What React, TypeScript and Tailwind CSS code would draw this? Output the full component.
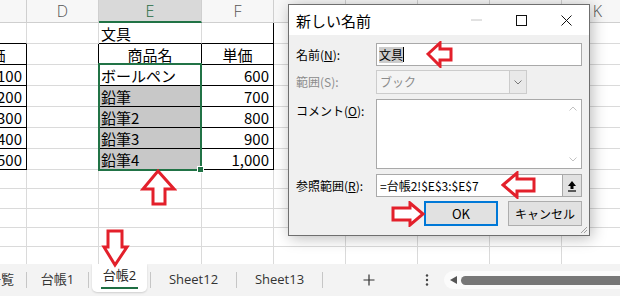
import React from "react";

const CELL_FONT = { fontFamily: '"Noto Sans CJK JP", "Noto Sans", sans-serif' };

type CellProps = {
  w: string;
  cls?: string;
  children?: React.ReactNode;
};

function Cell({ w, cls = "", children }: CellProps) {
  return (
    <div className={`${w} shrink-0 h-full flex items-center border-r border-b ${cls}`}>
      {children}
    </div>
  );
}

// column widths: C (partly hidden), D, E, F, G, H, I, J, K
const W = {
  C: "w-[72px] -ml-[45px]",
  D: "w-[72px]",
  E: "w-[103px]",
  F: "w-[72px]",
  G: "w-[72px]",
  H: "w-[72px]",
  I: "w-[72px]",
  J: "w-[72px]",
  K: "w-[72px]",
};

const grid = "border-[#dadada]";

const items = [
  { name: "ボールペン", left: "100", price: "600", shaded: false },
  { name: "鉛筆", left: "200", price: "700", shaded: true },
  { name: "鉛筆2", left: "300", price: "800", shaded: true },
  { name: "鉛筆3", left: "400", price: "900", shaded: true },
  { name: "鉛筆4", left: "500", price: "1,000", shaded: true },
];

function EmptyTail() {
  return (
    <>
      <Cell w={W.G} cls={grid} />
      <Cell w={W.H} cls={grid} />
      <Cell w={W.I} cls={grid} />
      <Cell w={W.J} cls={grid} />
      <Cell w={W.K} cls={grid} />
    </>
  );
}

function HeaderRow() {
  const hd = "justify-center text-[16px] font-light text-[#555] border-[#cfcfcf] bg-[#f7f7f7]";
  return (
    <div className="flex h-[23px]" style={{ fontFamily: '"Open Sans", "Liberation Sans", sans-serif' }}>
      <Cell w={W.C} cls={hd} />
      <Cell w={W.D} cls={hd}>D</Cell>
      <Cell w={W.E} cls="justify-center text-[16px] font-light text-[#1e6b41] bg-[#d9d9d9] border-[#cfcfcf] border-b-2 border-b-[#217346]">E</Cell>
      <Cell w={W.F} cls={hd}>F</Cell>
      <Cell w={W.G} cls={hd}>G</Cell>
      <Cell w={W.H} cls={hd}>H</Cell>
      <Cell w={W.I} cls={hd}>I</Cell>
      <Cell w={W.J} cls={hd}>J</Cell>
      <Cell w={W.K} cls={hd}>K</Cell>
    </div>
  );
}

function Sheet() {
  return (
    <div className="relative h-[264px] overflow-hidden bg-white text-[15px] text-black leading-none" style={CELL_FONT}>
      <HeaderRow />

      {/* row 2 */}
      <div className="flex h-[21px]">
        <Cell w={W.C} cls="border-r-[#dadada] border-b-black" />
        <Cell w={W.D} cls={grid} />
        <Cell w={W.E} cls="pl-[2px] border-r-[#dadada] border-b-black">文具</Cell>
        <Cell w={W.F} cls="border-r-black border-b-black" />
        <EmptyTail />
      </div>

      {/* row 3: table header */}
      <div className="flex h-[21px]">
        <Cell w={W.C} cls="justify-center border-black">単価</Cell>
        <Cell w={W.D} cls="border-r-black border-b-[#dadada]" />
        <Cell w={W.E} cls="justify-center border-black">商品名</Cell>
        <Cell w={W.F} cls="justify-center border-black">単価</Cell>
        <EmptyTail />
      </div>

      {items.map((it) => (
        <div key={it.name} className="flex h-[21px]">
          <Cell w={W.C} cls="justify-end pr-[4px] border-black">{it.left}</Cell>
          <Cell w={W.D} cls="border-r-black border-b-[#dadada]" />
          <Cell w={W.E} cls={`pl-[2px] border-black ${it.shaded ? "bg-[#c8c8c8]" : ""}`}>{it.name}</Cell>
          <Cell w={W.F} cls="justify-end pr-[4px] border-black">{it.price}</Cell>
          <EmptyTail />
        </div>
      ))}

      {["h-[19px]", "h-[20px]", "h-[19px]", "h-[19px]", "h-[19px]"].map((h, i) => (
        <div key={i} className={`flex ${h}`}>
          <Cell w={W.C} cls={grid} />
          <Cell w={W.D} cls={grid} />
          <Cell w={W.E} cls={grid} />
          <Cell w={W.F} cls={grid} />
          <EmptyTail />
        </div>
      ))}

      {/* selection E4:E8 */}
      <div className="absolute left-[98px] top-[63px] w-[104px] h-[108px] border-2 border-[#217346] pointer-events-none" />
      <div className="absolute left-[197px] top-[166px] w-[7px] h-[7px] bg-[#217346] border border-white" />
    </div>
  );
}

function TabSep() {
  return <div className="w-px h-[16px] bg-[#c6c6c6] shrink-0" />;
}

function TabBar() {
  return (
    <div
      className="h-[32px] bg-[#f3f3f3] flex items-center text-[13px] text-[#333] overflow-hidden"
      style={{ fontFamily: '"Open Sans", "Noto Sans CJK JP", sans-serif' }}
    >
      <div className="w-[26px] shrink-0 overflow-hidden whitespace-nowrap">
        <span className="-ml-[12px] inline-block">一覧</span>
      </div>
      <TabSep />
      <div className="w-[61px] shrink-0 text-center">台帳1</div>
      <TabSep />
      <div className="w-[61px] shrink-0 h-full px-[3px] pb-[4px]">
        <div className="h-full bg-white rounded-b-[5px] shadow-[0_1px_2px_rgba(0,0,0,0.15)] flex flex-col items-center justify-center">
          <span className="text-[#222] leading-none mt-[2px]">台帳2</span>
          <span className="mt-[5px] h-[2px] w-[37px] bg-[#1e6e42]" />
        </div>
      </div>
      <TabSep />
      <div className="w-[85px] shrink-0 text-center">Sheet12</div>
      <TabSep />
      <div className="w-[85px] shrink-0 text-center">Sheet13</div>
      <TabSep />
      <div className="w-[92px] shrink-0 flex justify-center">
        <svg width="12" height="12" viewBox="0 0 12 12">
          <path d="M6 0.5V11.5M0.5 6H11.5" stroke="#333" strokeWidth="1.2" />
        </svg>
      </div>
      <div className="w-[24px] shrink-0 flex justify-center">
        <svg width="4" height="12" viewBox="0 0 4 12">
          <circle cx="2" cy="1.5" r="1.2" fill="#444" />
          <circle cx="2" cy="6" r="1.2" fill="#444" />
          <circle cx="2" cy="10.5" r="1.2" fill="#444" />
        </svg>
      </div>
      <div className="flex-1 h-[18px] ml-[5px] bg-[#fbfbfb] rounded-l-full flex items-center pl-[6px] gap-[4px]">
        <svg width="7" height="8" viewBox="0 0 7 8">
          <path d="M0 4L7 0V8Z" fill="#555" />
        </svg>
        <div className="flex-1 h-[9px] bg-[#777] rounded-l-full" />
      </div>
    </div>
  );
}

function Field({ children, cls = "" }: { children?: React.ReactNode; cls?: string }) {
  return <div className={`bg-white border border-[#a9a9a9] flex items-center ${cls}`}>{children}</div>;
}

function Dialog() {
  return (
    <div
      className="absolute left-[288px] top-[4px] w-[302px] h-[232px] border border-[#6f6f6f] bg-[#f0f0f0] shadow-[2px_2px_14px_rgba(0,0,0,0.28)] flex flex-col text-[12px] text-black"
      style={{ fontFamily: '"Noto Sans CJK JP", "Noto Sans", sans-serif' }}
    >
      {/* title bar */}
      <div className="h-[30px] bg-white flex items-center pl-[7px] shrink-0">
        <span className="text-[15px] flex-1 leading-none">新しい名前</span>
        <div className="w-[45px] flex justify-center">
          <svg width="11" height="2" viewBox="0 0 11 2">
            <path d="M0 1H11" stroke="#c4c4c4" strokeWidth="1" />
          </svg>
        </div>
        <div className="w-[45px] flex justify-center">
          <svg width="11" height="11" viewBox="0 0 11 11">
            <rect x="0.5" y="0.5" width="10" height="10" fill="none" stroke="#111" strokeWidth="1" />
          </svg>
        </div>
        <div className="w-[45px] flex justify-center">
          <svg width="11" height="11" viewBox="0 0 11 11">
            <path d="M0.5 0.5L10.5 10.5M10.5 0.5L0.5 10.5" stroke="#111" strokeWidth="1" />
          </svg>
        </div>
      </div>

      {/* body */}
      <div className="relative flex-1 pt-[8px] pl-[7px] pr-[7px] flex flex-col">
        <div className="flex h-[23px] items-center">
          <div className="w-[80px] shrink-0">
            名前(<span className="underline">N</span>):
          </div>
          <Field cls="flex-1 h-full pl-[2px]">
            <span className="bg-[#cccccc] leading-[16px]">文具</span>
            <span className="w-px h-[15px] bg-black" />
          </Field>
        </div>

        <div className="flex h-[24px] items-center mt-[4px] text-[#8c8c8c]">
          <div className="w-[80px] shrink-0">範囲(S):</div>
          <div className="w-[151px] h-full border border-[#cccccc] bg-[#f4f4f4] flex items-center">
            <span className="flex-1 pl-[3px]">ブック</span>
            <div className="w-[17px] h-full border-l border-[#cccccc] bg-[#e9e9e9] flex items-center justify-center">
              <svg width="8" height="5" viewBox="0 0 8 5">
                <path d="M0.5 0.5L4 4L7.5 0.5" fill="none" stroke="#777" strokeWidth="1" />
              </svg>
            </div>
          </div>
        </div>

        <div className="flex h-[70px] mt-[5px]">
          <div className="w-[80px] shrink-0 pt-[3px]">
            コメント(<span className="underline">O</span>):
          </div>
          <div className="flex-1 bg-white border border-[#a9a9a9] flex justify-end">
            <div className="w-[17px] flex flex-col items-center justify-between py-[6px]">
              <svg width="8" height="5" viewBox="0 0 8 5">
                <path d="M0.5 4.5L4 1L7.5 4.5" fill="none" stroke="#c2c2c2" strokeWidth="1" />
              </svg>
              <svg width="8" height="5" viewBox="0 0 8 5">
                <path d="M0.5 0.5L4 4L7.5 0.5" fill="none" stroke="#c2c2c2" strokeWidth="1" />
              </svg>
            </div>
          </div>
        </div>

        <div className="flex h-[23px] items-center mt-[5px]">
          <div className="w-[80px] shrink-0">
            参照範囲(<span className="underline">R</span>):
          </div>
          <Field cls="flex-1 h-full">
            <span className="flex-1 pl-[3px]">=台帳2!$E$3:$E$7</span>
            <div className="w-[19px] h-full bg-[#e1e1e1] border-l border-[#a9a9a9] flex items-center justify-center">
              <svg width="10" height="12" viewBox="0 0 10 12">
                <path d="M5 1L9 6H6.5V9H3.5V6H1Z" fill="#000" />
                <path d="M1 11H9" stroke="#000" strokeWidth="1.2" />
              </svg>
            </div>
          </Field>
        </div>

        <div className="flex h-[25px] mt-[4px] justify-end gap-[10px]">
          <button className="w-[74px] h-full bg-[#e1e1e1] border-2 border-[#0078d7] text-[13px] font-normal">OK</button>
          <button className="w-[74px] h-full bg-[#e1e1e1] border border-[#adadad] text-[12px] font-normal">キャンセル</button>
        </div>

        {/* resize grip */}
        <svg className="absolute right-[1px] bottom-[1px]" width="8" height="8" viewBox="0 0 8 8">
          <path d="M7 1L1 7M7 4L4 7" stroke="#a0a0a0" strokeWidth="1" />
        </svg>
      </div>
    </div>
  );
}

type ArrowProps = { cls: string; w: number; h: number; points: string };

function Arrow({ cls, w, h, points }: ArrowProps) {
  return (
    <svg className={`absolute ${cls}`} width={w} height={h} viewBox={`0 0 ${w} ${h}`}>
      <polygon points={points} fill="#fff" stroke="#e3202b" strokeWidth="3" strokeLinejoin="miter" />
    </svg>
  );
}

export default function App() {
  return (
    <div className="relative w-[620px] h-[296px] overflow-hidden bg-white">
      <Sheet />
      <TabBar />
      <Dialog />

      {/* up arrow under E column */}
      <Arrow cls="left-[140px] top-[169px]" w={37} h={38} points="18,2 34,20 25,20 25,35 13,35 13,20 3,20" />
      {/* down arrow above 台帳2 tab */}
      <Arrow cls="left-[101px] top-[229px]" w={29} h={39} points="7,2 21,2 21,18 26,18 14,36 3,18 7,18" />
      {/* left arrow at name field */}
      <Arrow cls="left-[426px] top-[41px]" w={28} h={27} points="2,13 14,2 14,8 25,8 25,19 14,19 14,25" />
      {/* left arrow at reference field */}
      <Arrow cls="left-[501px] top-[171px]" w={36} h={28} points="2,14 16,2 16,8 33,8 33,20 16,20 16,26" />
      {/* right arrow at OK */}
      <Arrow cls="left-[390px] top-[201px]" w={36} h={26} points="33,13 20,2 20,7 3,7 3,19 20,19 20,24" />
    </div>
  );
}
